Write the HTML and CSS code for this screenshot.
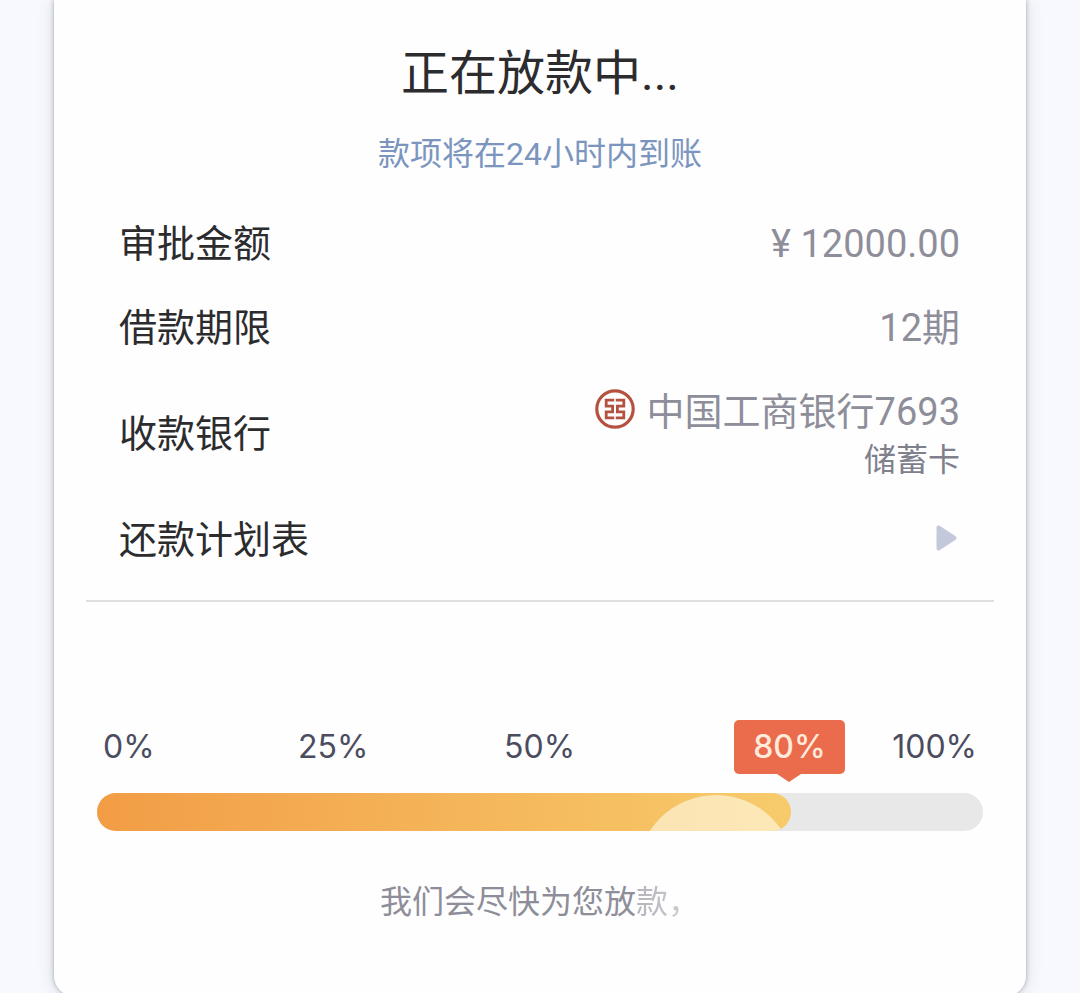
FILE: index.html
```html
<!DOCTYPE html>
<html lang="zh-CN">
<head>
<meta charset="utf-8">
<meta name="viewport" content="width=device-width, initial-scale=1">
<title>正在放款中</title>
<link rel="stylesheet" href="styles.css">
</head>
<body>
<main class="card">
  <header class="heading">
    <h1 class="title">正在放款中...</h1>
    <p class="subtitle">款项将在24小时内到账</p>
  </header>

  <dl class="details">
    <div class="row">
      <dt>审批金额</dt>
      <dd>¥ 12000.00</dd>
    </div>
    <div class="row">
      <dt>借款期限</dt>
      <dd>12期</dd>
    </div>
    <div class="row row-bank">
      <dt>收款银行</dt>
      <dd>
        <span class="bank">
          <svg class="bank-logo" viewBox="0 0 40 40" aria-hidden="true">
            <circle cx="20" cy="20" r="18.2" fill="none" stroke="#b5523f" stroke-width="3.2"/>
            <g fill="none" stroke="#b5523f" stroke-width="2.8">
              <path d="M19.2 11.2H11.2V17.1H17.6V22.9H11.2V28.8H19.2"/>
              <path d="M20.8 11.2H28.8V17.1H22.4V22.9H28.8V28.8H20.8"/>
            </g>
          </svg>
          <span>中国工商银行7693</span>
        </span>
        <small class="card-type">储蓄卡</small>
      </dd>
    </div>
  </dl>
  <button class="row plan" type="button">
    <span>还款计划表</span>
    <svg class="arrow" viewBox="0 0 24 34" aria-hidden="true">
      <path d="M2.500 4.500V25.500L18.500 15Z" fill="#c3c9da" stroke="#c3c9da" stroke-width="4" stroke-linejoin="round"/>
    </svg>
  </button>

  <section class="progress" aria-label="放款进度">
    <div class="scale">
      <span>0%</span>
      <span>25%</span>
      <span>50%</span>
      <strong class="badge">80%</strong>
      <span>100%</span>
    </div>
    <div class="track"><div class="fill"></div></div>
  </section>

  <p class="note">我们会尽快为您放<span class="fade">款，</span></p>
</main>
</body>
</html>
```
FILE: styles.css
```css
* {
  box-sizing: border-box;
}

body {
  margin: 0;
  height: 100vh;
  overflow: hidden;
  background: #f7f9fe;
  color: #2c2c2e;
  font-family: Roboto, "Noto Sans CJK SC", sans-serif;
}

.card {
  margin: 0 5%;
  padding: 44px 32px 74px;
  border-radius: 0 0 20px 20px;
  background: #fefefe;
  box-shadow: 0 0 4px rgba(60, 64, 80, 0.4), 0 0 18px rgba(60, 64, 90, 0.16);
}

.heading {
  text-align: center;
}

.title {
  margin: 0;
  font-size: 48px;
  line-height: 60px;
  font-weight: 400;
}

.subtitle {
  margin: 30px 0 0;
  font-size: 32px;
  line-height: 40px;
  color: #7b95bf;
}

.details {
  margin: 44px 0 0;
  padding: 0 34px 0 33px;
}

.row {
  display: flex;
  align-items: center;
  justify-content: space-between;
  font-size: 38px;
  line-height: 52px;
}

.row + .row {
  margin-top: 32px;
}

.row dd {
  margin: 0;
  color: #8e8e9a;
}

.row-bank dd {
  display: flex;
  flex-direction: column;
  align-items: flex-end;
}

.bank {
  display: flex;
  align-items: flex-start;
  gap: 12px;
}

.bank-logo {
  width: 40px;
  height: 40px;
  margin-top: 3px;
}

.card-type {
  font-size: 32px;
  line-height: 44px;
  color: #80808c;
}

.plan {
  width: 100%;
  margin-top: 32px;
  padding: 0 34px 34px 33px;
  border: 0;
  border-bottom: 2px solid #e0e0e0;
  background: none;
  color: inherit;
  font-family: inherit;
  cursor: pointer;
}

.arrow {
  width: 24px;
  height: 34px;
}

.progress {
  margin-top: 118px;
  padding: 0 11px;
}

.scale {
  display: grid;
  grid-template-columns: 195fr 206fr 230fr 158fr auto;
  align-items: center;
  padding: 0 6px;
  font-family: Inter, sans-serif;
  font-size: 32px;
  line-height: 54px;
  color: #4b4d5e;
}

.badge {
  position: relative;
  justify-self: start;
  padding: 0 19px;
  border-radius: 5px;
  background: #eb6b4d;
  color: #ffeadb;
  font-weight: 500;
}

.badge::after {
  content: "";
  position: absolute;
  top: 100%;
  left: 50%;
  border: 12px solid transparent;
  border-top: 8px solid #eb6b4d;
  border-bottom: 0;
  transform: translateX(-50%);
}

.track {
  height: 38px;
  margin-top: 19px;
  border-radius: 19px;
  background: #e8e8e8;
}

.fill {
  position: relative;
  width: 78.3%;
  height: 100%;
  border-radius: 19px;
  overflow: hidden;
  background: linear-gradient(90deg, #f29d46, #f7cb6b);
}

.fill::after {
  content: "";
  position: absolute;
  top: 2px;
  right: -4px;
  width: 158px;
  height: 158px;
  border-radius: 50%;
  background: rgba(255, 247, 225, 0.65);
}

.note {
  margin: 51px 0 0;
  text-align: center;
  font-size: 32px;
  line-height: 40px;
  color: #8e8e9a;
}

.fade {
  background: linear-gradient(90deg, #b4b4bc, #d2d2d8);
  background-clip: text;
  -webkit-background-clip: text;
  color: transparent;
}
```
